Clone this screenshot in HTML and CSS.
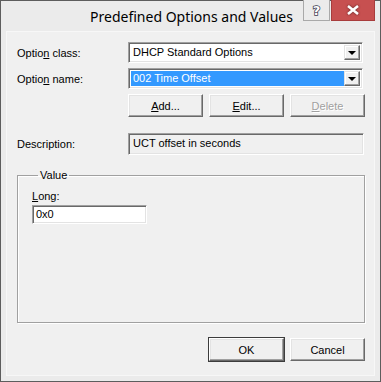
FILE: index.html
```html
<!DOCTYPE html>
<html lang="en">
<head>
  <meta charset="UTF-8">
  <meta name="viewport" content="width=device-width, initial-scale=1.0">
  <title>Predefined Options and Values</title>
  <link rel="stylesheet" href="styles.css">
</head>
<body>
  <div class="window">
    <div class="titlebar">
      <div class="title">Predefined Options and Values</div>
      <div class="caption-buttons">
        <div class="cap-btn help">?</div>
        <div class="cap-btn close">
          <svg width="12" height="10" viewBox="0 0 12 10">
            <path d="M1 1 L11 9 M11 1 L1 9" stroke="#fff" stroke-width="2.6" fill="none"/>
          </svg>
        </div>
      </div>
    </div>

    <div class="client">
      <div class="form-row first">
        <label class="lbl">Optio<u>n</u> class:</label>
        <div class="combo">
          <span class="combo-text">DHCP Standard Options</span>
          <span class="combo-arrow"></span>
        </div>
      </div>
      <div class="form-row">
        <label class="lbl">Optio<u>n</u> name:</label>
        <div class="combo">
          <span class="combo-text selected">002 Time Offset</span>
          <span class="combo-arrow"></span>
        </div>
      </div>
      <div class="btn-row">
        <button class="btn"><u>A</u>dd...</button>
        <button class="btn"><u>E</u>dit...</button>
        <button class="btn disabled"><u>D</u>elete</button>
      </div>

      <div class="form-row desc-row">
        <label class="lbl">Description:</label>
        <div class="desc-box">UCT offset in seconds</div>
      </div>

      <fieldset class="group">
        <legend>Value</legend>
        <div class="field-lbl"><u>L</u>ong:</div>
        <div class="textbox">0x0</div>
      </fieldset>

      <div class="footer">
        <button class="btn default">OK</button>
        <button class="btn">Cancel</button>
      </div>
    </div>
  </div>
</body>
</html>
```

FILE: styles.css
```css
body {
  margin: 0;
  font-family: "Liberation Sans", Arial, sans-serif;
  font-size: 11px;
  color: #000;
}
.window {
  width: 381px;
  height: 382px;
  box-sizing: border-box;
  border: 1px solid #5d5d5d;
  background-color: #ebebeb;
  display: flex;
  flex-direction: column;
}
.titlebar {
  height: 30px;
  position: relative;
  display: flex;
  justify-content: center;
}
.title {
  font-family: "Noto Sans", "Open Sans", sans-serif;
  font-size: 14px;
  padding-top: 6px;
  padding-left: 2px;
  color: #000;
}
.caption-buttons {
  position: absolute;
  top: -1px;
  right: 5px;
  display: flex;
  gap: 1px;
}
.cap-btn {
  height: 21px;
  box-sizing: border-box;
  display: flex;
  align-items: center;
  justify-content: center;
}
.help {
  width: 27px;
  border: 1px solid #a9a9a9;
  border-top: none;
  background-color: #ebebeb;
  color: #fff;
  font-family: "DejaVu Sans", sans-serif;
  font-weight: bold;
  font-size: 13px;
  -webkit-text-stroke: 1.5px #3b3b4f;
  paint-order: stroke fill;
}
.close {
  width: 44px;
  background-color: #c75050;
  border: 1px solid #a83c3c;
  border-top: none;
}
.close svg {
  filter: drop-shadow(0 0 1px #5a1f1f);
}
.client {
  flex: 1;
  margin: 0 5px 5px 5px;
  background-color: #f0f0f0;
  border: 1px solid #f7f7f7;
  padding: 10px 9px 0 10px;
  display: flex;
  flex-direction: column;
}
.form-row {
  display: flex;
  align-items: center;
  height: 21px;
  margin-bottom: 5px;
}
.lbl {
  width: 111px;
  flex-shrink: 0;
}
.combo {
  width: 235px;
  height: 21px;
  box-sizing: border-box;
  border-top: 1px solid #a0a0a0;
  border-left: 1px solid #a0a0a0;
  border-right: 1px solid #fff;
  border-bottom: 1px solid #fff;
  box-shadow: inset 1px 1px 0 #696969, inset -1px -1px 0 #e3e3e3;
  background-color: #fff;
  display: flex;
  align-items: center;
  padding: 2px;
}
.combo-text {
  flex: 1;
  height: 15px;
  line-height: 15px;
  padding-left: 2px;
}
.combo-text.selected {
  background-color: #3399ff;
  color: #fff;
}
.combo-arrow {
  width: 16px;
  height: 15px;
  box-sizing: border-box;
  background-color: #f0f0f0;
  border-top: 1px solid #e3e3e3;
  border-left: 1px solid #e3e3e3;
  border-right: 1px solid #696969;
  border-bottom: 1px solid #696969;
  box-shadow: inset -1px -1px 0 #a0a0a0, inset 1px 1px 0 #fff;
  position: relative;
}
.combo-arrow::after {
  content: "";
  position: absolute;
  left: 3px;
  top: 5px;
  border-left: 4px solid transparent;
  border-right: 4px solid transparent;
  border-top: 4px solid #000;
}
.btn-row {
  display: flex;
  gap: 6px;
  margin-left: 111px;
  margin-bottom: 16px;
}
.btn {
  width: 75px;
  height: 23px;
  font-family: inherit;
  font-size: 11px;
  background-color: #f0f0f0;
  border-top: 1px solid #fff;
  border-left: 1px solid #fff;
  border-right: 1px solid #696969;
  border-bottom: 1px solid #696969;
  box-shadow: inset -1px -1px 0 #a0a0a0, inset 1px 1px 0 #e3e3e3;
  padding: 0;
  color: #000;
}
.btn.disabled {
  color: #a0a0a0;
  text-shadow: 1px 1px 0 #fff;
}
.btn.default {
  outline: 1px solid #3c3c3c;
  outline-offset: 0;
}
.desc-row {
  height: 22px;
  margin-bottom: 0;
}
.desc-box {
  width: 236px;
  height: 22px;
  box-sizing: border-box;
  border-top: 1px solid #a0a0a0;
  border-left: 1px solid #a0a0a0;
  border-right: 1px solid #fff;
  border-bottom: 1px solid #fff;
  box-shadow: inset 1px 1px 0 #696969, inset -1px -1px 0 #e3e3e3;
  padding: 2px 4px;
  line-height: 15px;
}
.group {
  margin: 14px 0 0 0;
  width: 348px;
  height: 154px;
  box-sizing: border-box;
  border: 1px solid #a0a0a0;
  box-shadow: inset 1px 1px 0 #fff, 1px 1px 0 #fff;
  padding: 9px 0 0 14px;
}
.group legend {
  padding: 0 2px;
  margin-left: 6px;
  font-size: 11px;
}
.field-lbl {
  margin-bottom: 3px;
}
.textbox {
  width: 115px;
  height: 19px;
  box-sizing: border-box;
  background-color: #fff;
  border-top: 1px solid #a0a0a0;
  border-left: 1px solid #a0a0a0;
  border-right: 1px solid #fff;
  border-bottom: 1px solid #fff;
  box-shadow: inset 1px 1px 0 #696969, inset -1px -1px 0 #e3e3e3;
  padding: 1px 3px;
  line-height: 15px;
}
.footer {
  display: flex;
  justify-content: flex-end;
  gap: 6px;
  margin-top: 15px;
}
```
